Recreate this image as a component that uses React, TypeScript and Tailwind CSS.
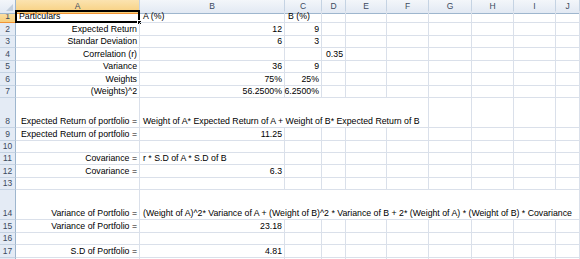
type Cell = { t: string; right?: boolean; span?: string };
type Row = { n: number; tall?: boolean; cells: Record<string, Cell> };

const COLS = ["A", "B", "C", "D", "E", "F", "G", "H", "I", "J"];
const GRID = "grid grid-cols-[16px_124px_145px_37px_24px_41px_42px_43px_42px_42px_1fr]";

// how many columns a spilled cell covers
const SPAN_WIDTH: Record<string, number> = { "col-span-5": 5, "col-span-9": 9 };

const rows: Row[] = [
  { n: 1, cells: { A: { t: "Particulars" }, B: { t: "A (%)" }, C: { t: "B (%)" } } },
  { n: 2, cells: { A: { t: "Expected Return", right: true }, B: { t: "12", right: true }, C: { t: "9", right: true } } },
  { n: 3, cells: { A: { t: "Standar Deviation", right: true }, B: { t: "6", right: true }, C: { t: "3", right: true } } },
  { n: 4, cells: { A: { t: "Correlation (r)", right: true }, D: { t: "0.35", right: true } } },
  { n: 5, cells: { A: { t: "Variance", right: true }, B: { t: "36", right: true }, C: { t: "9", right: true } } },
  { n: 6, cells: { A: { t: "Weights", right: true }, B: { t: "75%", right: true }, C: { t: "25%", right: true } } },
  { n: 7, cells: { A: { t: "(Weights)^2", right: true }, B: { t: "56.2500%", right: true }, C: { t: "6.2500%", right: true } } },
  {
    n: 8,
    tall: true,
    cells: {
      A: { t: "Expected Return of portfolio =", right: true },
      B: { t: "Weight of A* Expected Return of A + Weight of B* Expected Return of B", span: "col-span-5" },
    },
  },
  { n: 9, cells: { A: { t: "Expected Return of portfolio =", right: true }, B: { t: "11.25", right: true } } },
  { n: 10, cells: {} },
  { n: 11, cells: { A: { t: "Covariance =", right: true }, B: { t: "r * S.D of A * S.D of B" } } },
  { n: 12, cells: { A: { t: "Covariance =", right: true }, B: { t: "6.3", right: true } } },
  { n: 13, cells: {} },
  {
    n: 14,
    tall: true,
    cells: {
      A: { t: "Variance of Portfolio =", right: true },
      B: {
        t: "(Weight of A)^2* Variance of A + (Weight of B)^2 * Variance of B + 2* (Weight of A) * (Weight of B) * Covariance",
        span: "col-span-9",
      },
    },
  },
  { n: 15, cells: { A: { t: "Variance of Portfolio =", right: true }, B: { t: "23.18", right: true } } },
  { n: 16, cells: {} },
  { n: 17, cells: { A: { t: "S.D of Portfolio =", right: true }, B: { t: "4.81", right: true } } },
];

function ColumnHeader() {
  return (
    <div className={`${GRID} h-[11px]`}>
      <div className="relative border-r border-b border-[#9eb6ce] bg-gradient-to-b from-[#f3f6fa] to-[#e2e9f3]">
        <div className="absolute right-[2px] bottom-[2px] w-0 h-0 border-l-[7px] border-l-transparent border-b-[7px] border-b-[#c3cfdd]" />
      </div>
      {COLS.map((c) => (
        <div
          key={c}
          className={
            c === "A"
              ? "flex items-center justify-center border-r border-b border-[#f29536] border-r-[#c5d3e3] bg-gradient-to-b from-[#fbe3b0] to-[#f7cf7c] text-[8.5px] text-[#3b4a5e]"
              : "flex items-center justify-center border-r border-b border-[#c5d3e3] border-b-[#9eb6ce] bg-gradient-to-b from-[#f3f6fa] to-[#e2e9f3] text-[8.5px] text-[#3b4a5e]"
          }
        >
          {c}
        </div>
      ))}
    </div>
  );
}

function SheetRow({ row }: { row: Row }) {
  const cells: JSX.Element[] = [];
  let skip = 0;
  COLS.forEach((c) => {
    if (skip > 0) {
      skip--;
      return;
    }
    const cell = row.cells[c];
    if (cell?.span) skip = SPAN_WIDTH[cell.span] - 1;
    const selected = row.n === 1 && c === "A";
    cells.push(
      <div
        key={c}
        className={`relative flex items-end whitespace-nowrap border-r border-b border-[#dae0ea] pb-[1px] ${
          cell?.right ? "justify-end pr-[2px]" : "justify-start pl-[3px]"
        } ${cell?.span ?? ""}`}
      >
        {cell && <span className="leading-[10px]">{cell.t}</span>}
        {selected && (
          <>
            <div className="absolute -left-[1px] -top-[1px] -right-[1px] -bottom-[1px] border-2 border-black" />
            <div className="absolute -right-[3px] -bottom-[3px] w-[5px] h-[5px] bg-black border border-white" />
          </>
        )}
      </div>
    );
  });

  return (
    <div className={`${GRID} ${row.tall ? "h-[30px]" : "h-[12.45px]"}`}>
      <div
        className={
          row.n === 1
            ? "flex items-end justify-center pb-[1px] border-r border-b border-[#f29536] bg-gradient-to-b from-[#fbe3b0] to-[#f7cf7c] text-[8.5px] text-[#3b4a5e]"
            : "flex items-end justify-center pb-[1px] border-r border-b border-[#c5d3e3] border-r-[#9eb6ce] bg-[#e4ebf5] text-[8.5px] text-[#3b4a5e]"
        }
      >
        <span className="leading-[10px]">{row.n}</span>
      </div>
      {cells}
    </div>
  );
}

// row 18 only peeks in at the bottom edge
function PartialRow() {
  return (
    <div className={`${GRID} h-[12.45px]`}>
      <div className="border-r border-[#9eb6ce] bg-[#e4ebf5]" />
      {COLS.map((c) => (
        <div key={c} className="border-r border-[#dae0ea]" />
      ))}
    </div>
  );
}

export default function App() {
  return (
    <div className="w-[580px] h-[259px] overflow-hidden bg-white text-black text-[8.75px] font-['Liberation_Sans',Arial,sans-serif]">
      <ColumnHeader />
      {rows.map((r) => (
        <SheetRow key={r.n} row={r} />
      ))}
      <PartialRow />
    </div>
  );
}
